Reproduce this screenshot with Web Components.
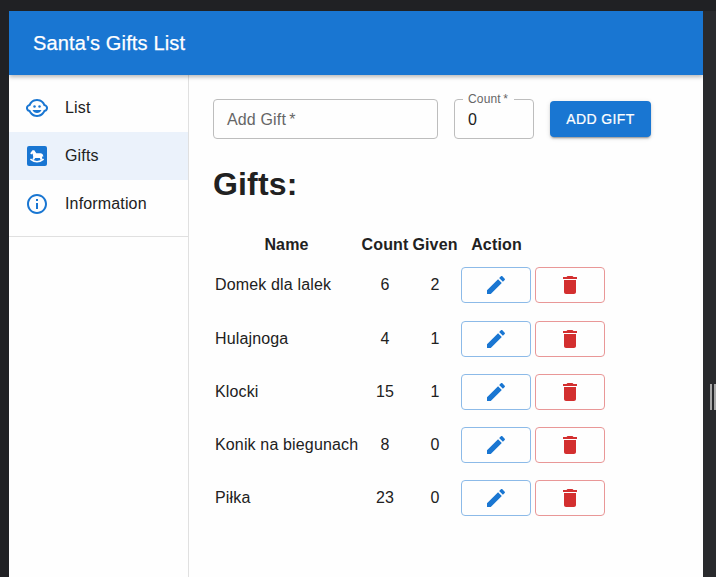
<!DOCTYPE html>
<html lang="en">
<head>
<meta charset="utf-8">
<title>Santa's Gifts List</title>
<style>
html,body{margin:0;height:100%;overflow:hidden}
body{font:16px/24px "Liberation Sans",Arial,sans-serif;letter-spacing:.15px;color:#212121;background:#202124}
</style>
</head>
<body>
<gift-app></gift-app>
<script>
const ICONS = {
  child: '<path d="M22.94 11.34c-.25-1.51-1.36-2.74-2.81-3.17-.53-1.12-1.28-2.1-2.19-2.91C16.36 3.85 14.28 3 12 3s-4.36.85-5.94 2.26c-.92.81-1.67 1.8-2.19 2.91-1.45.43-2.56 1.65-2.81 3.17-.04.21-.06.43-.06.66s.02.45.06.66c.25 1.51 1.36 2.74 2.81 3.17.52 1.11 1.27 2.09 2.17 2.89C7.62 20.14 9.71 21 12 21s4.38-.86 5.97-2.28c.9-.8 1.65-1.79 2.17-2.89 1.44-.43 2.55-1.65 2.8-3.17.04-.21.06-.43.06-.66s-.02-.45-.06-.66zM19 14c-.1 0-.19-.02-.29-.03-.2.67-.49 1.29-.86 1.86C16.6 17.74 14.45 19 12 19s-4.6-1.26-5.85-3.17c-.37-.57-.66-1.19-.86-1.86-.1.01-.19.03-.29.03-1.1 0-2-.9-2-2s.9-2 2-2c.1 0 .19.02.29.03.2-.67.49-1.29.86-1.86C7.4 6.26 9.55 5 12 5s4.6 1.26 5.85 3.17c.37.57.66 1.19.86 1.86.1-.01.19-.03.29-.03 1.1 0 2 .9 2 2s-.9 2-2 2z"/><circle cx="14.5" cy="10.5" r="1.25"/><circle cx="9.5" cy="10.5" r="1.25"/><path d="M7.5 14c.76 1.77 2.49 3 4.5 3s3.74-1.23 4.5-3h-9z"/>',
  horse: '<rect x="2" y="2" width="20" height="20" rx="2"/><path fill="#fff" d="M5.200 9.200 7.300 6.600 7.500 6.300H9.300L11.300 9.200H15.500C17 9.200 18 10.200 18.200 11.800L18.200 13 17 12.200 17.300 15.300 15.600 16 14.900 13.900H10.200L8.900 16 7.400 15.300 8.300 13.300 7.600 9.600 6.200 10.600z"/><path d="M5.400 15.100Q12 20.400 18.600 15.100" fill="none" stroke="#fff" stroke-width="1.600"/>',
  info: '<path d="M11 7h2v2h-2zm0 4h2v6h-2zm1-9C6.480 2 2 6.480 2 12s4.480 10 10 10 10-4.480 10-10S17.520 2 12 2zm0 18c-4.410 0-8-3.590-8-8s3.590-8 8-8 8 3.590 8 8-3.590 8-8 8z"/>',
  edit: '<path d="M3 17.250V21h3.750L17.810 9.940l-3.750-3.750L3 17.250zM20.710 7.040c.39-.39.39-1.020 0-1.410l-2.340-2.340c-.39-.39-1.020-.39-1.410 0l-1.830 1.830 3.750 3.750 1.830-1.830z"/>',
  trash: '<path d="M6 19c0 1.100.9 2 2 2h8c1.100 0 2-.9 2-2V7H6v12zM19 4h-3.500l-1-1h-5l-1 1H5v2h14V4z"/>'
};

function define(name, render) {
  customElements.define(name, class extends HTMLElement {
    constructor() {
      super();
      this.attachShadow({mode: 'open'});
    }
    connectedCallback() {
      this.shadowRoot.innerHTML = render(this);
    }
  });
}

define('g-icon', el => `
<style>:host{display:block;width:24px;height:24px;flex:none}svg{display:block;width:100%;height:100%;fill:currentColor}</style>
<svg viewBox="0 0 24 24">${ICONS[el.getAttribute('name')]}</svg>`);

define('app-header', () => `
<style>:host{display:flex;align-items:center;height:64px;padding:0 24px;background:#1976d2;color:#fff;font-size:20px;-webkit-text-stroke:.25px #fff;position:relative;z-index:1;
box-shadow:0 2px 4px -1px rgba(0,0,0,.2),0 3px 4px rgba(0,0,0,.12);clip-path:inset(0 0 -12px 0)}</style>
<slot></slot>`);

define('nav-item', el => `
<style>:host{display:flex;align-items:center;gap:16px;height:48px;padding-left:16px}
:host([selected]){background:#ebf2fb}g-icon{color:#1976d2}</style>
<g-icon name="${el.getAttribute('icon')}"></g-icon><span><slot></slot></span>`);

define('side-nav', () => `
<style>:host{display:block;width:179px;flex:none;border-right:1px solid #e0e0e0}
nav{padding:9px 0 8px;border-bottom:1px solid #e0e0e0}</style>
<nav><slot></slot></nav>`);

define('text-field', el => `
<style>
:host{display:flex;box-sizing:border-box;height:40px;position:relative}
fieldset{box-sizing:border-box;width:100%;height:45px;margin:-5px 0 0;padding:0 8px;border:1px solid #bdbdbd;border-radius:4px;min-width:0}
legend{box-sizing:border-box;width:51px;height:11px;padding:0 5px;font-size:12px;line-height:11px;color:#666;white-space:nowrap}
.value{padding:0 5px;line-height:24px;margin-top:3px}
.placeholder{color:#666}
.plain{height:40px;margin:0}.plain .value{margin-top:8px}
</style>
<fieldset class="${el.hasAttribute('label') ? '' : 'plain'}">
${el.hasAttribute('label') ? `<legend>${el.getAttribute('label')}</legend>` : ''}
<div class="value ${el.hasAttribute('label') ? '' : 'placeholder'}"><slot></slot></div>
</fieldset>`);

define('add-button', () => `
<style>:host{display:block}
button{display:block;width:101px;height:36px;padding:0;border:0;border-radius:4px;background:#1976d2;color:#fff;font:14px/24px "Liberation Sans",Arial,sans-serif;letter-spacing:.4px;-webkit-text-stroke:.2px #fff;
box-shadow:0 3px 1px -2px rgba(0,0,0,.2),0 2px 2px rgba(0,0,0,.14),0 1px 5px rgba(0,0,0,.12)}</style>
<button><slot></slot></button>`);

define('icon-button', el => `
<style>:host{display:block;color:#1976d2;--line:#8cbae8}:host([danger]){color:#d32f2f;--line:#e99797}
button{display:flex;align-items:center;justify-content:center;width:70px;height:36px;padding:0;border:1px solid var(--line);border-radius:4px;background:none;color:inherit}</style>
<button aria-label="${el.getAttribute('icon')}"><g-icon name="${el.getAttribute('icon')}"></g-icon></button>`);

const COLUMNS = 'display:grid;grid-template-columns:143px 48px 46px 71px 70px;column-gap:3px;align-items:center';

define('gift-row', el => `
<style>:host{${COLUMNS};height:53.25px}.n{text-align:center}</style>
<span><slot></slot></span><span class="n">${el.getAttribute('count')}</span><span class="n">${el.getAttribute('given')}</span>
<icon-button icon="edit"></icon-button><icon-button icon="trash" danger></icon-button>`);

define('gift-table', () => `
<style>:host{display:block;padding-left:2px;white-space:nowrap}
.head{${COLUMNS};height:26px;margin-bottom:.800px;font-weight:bold;text-align:center}</style>
<div class="head"><span>Name</span><span>Count</span><span>Given</span><span>Action</span></div>
<slot></slot>`);

define('gift-app', () => `
<style>
:host{display:grid;grid-template:11px 566px / 9px 694px 13px;height:577px}
.top{grid-column:1/4}
.app{background:#fefefe;display:flex;flex-direction:column;grid-area:2/2}
.body{display:flex;flex:1}
main{padding:24px 0 0 24px;flex:1;min-width:0}
form{display:flex;gap:16px;align-items:center;height:40px}
h1{font-size:32px;line-height:37px;margin:27px 0 29px}
.rail{grid-area:2/3;background:#292a2d;display:flex;align-items:flex-start;justify-content:flex-end;gap:2px;padding-top:373px}
.rail i{width:2px;height:26px;background:#a7a7a7}
</style>
<div class="top"></div>
<div class="app">
  <app-header>Santa's Gifts List</app-header>
  <div class="body">
    <side-nav>
      <nav-item icon="child">List</nav-item>
      <nav-item icon="horse" selected>Gifts</nav-item>
      <nav-item icon="info">Information</nav-item>
    </side-nav>
    <main>
      <form>
        <text-field style="width:225px">Add Gift&thinsp;*</text-field>
        <text-field style="width:80px" label="Count&thinsp;*">0</text-field>
        <add-button>ADD GIFT</add-button>
      </form>
      <h1>Gifts:</h1>
      <gift-table>
        <gift-row count="6" given="2">Domek dla lalek</gift-row>
        <gift-row count="4" given="1">Hulajnoga</gift-row>
        <gift-row count="15" given="1">Klocki</gift-row>
        <gift-row count="8" given="0">Konik na biegunach</gift-row>
        <gift-row count="23" given="0">Piłka</gift-row>
      </gift-table>
    </main>
  </div>
</div>
<div class="rail"><i></i><i></i></div>`);
</script>
</body>
</html>
